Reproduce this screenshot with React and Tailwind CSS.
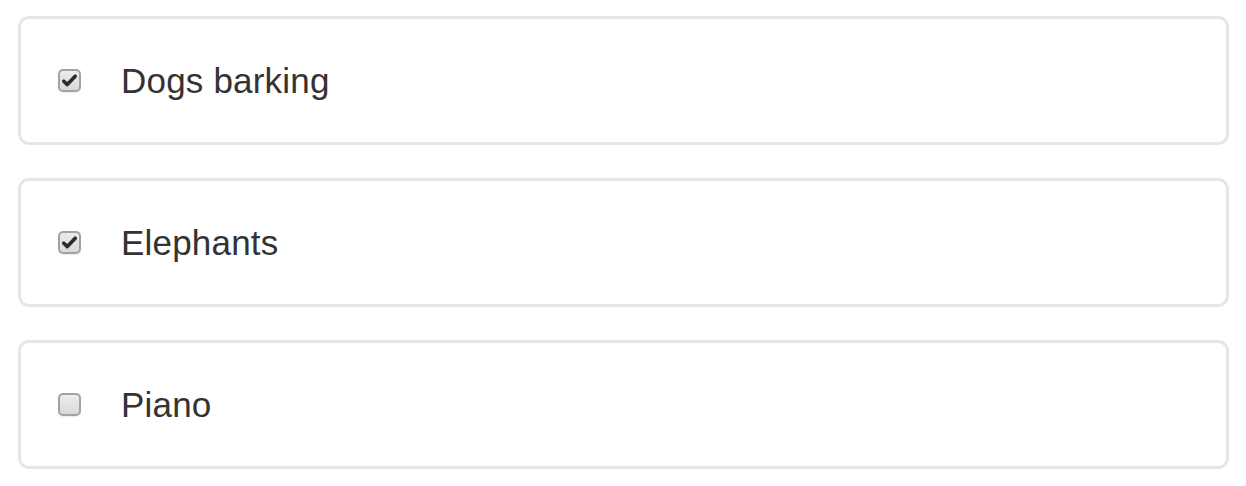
import React from "react";

function Box({ checked }) {
  return (
    <span className="relative flex h-[23px] w-[23px] shrink-0 items-center justify-center rounded-[5px] border-2 border-[#a3a3a3] bg-gradient-to-b from-[#ececec] to-[#d9d9d9] shadow-[0_1px_1px_rgba(0,0,0,0.08)]">
      {checked && (
        <svg width="15" height="13" viewBox="0 0 15 13" className="block">
          <path d="M1.8 7.2 L5.3 10.6 L13.2 2.2" fill="none" stroke="#2b2b2b" strokeWidth="3.6" strokeLinecap="round" strokeLinejoin="round" />
        </svg>
      )}
    </span>
  );
}

const items = [
  { label: "Dogs barking", checked: true },
  { label: "Elephants", checked: true },
  { label: "Piano", checked: false },
];

export default function App() {
  return (
    <div className="flex w-[1246px] flex-col gap-[33px] bg-white pl-[18px] pr-[17px] pt-[16px] pb-[17px]" style={{ fontFamily: '"Liberation Sans", Arial, sans-serif' }}>
      {items.map((it) => (
        <label key={it.label} className="flex h-[129px] items-center gap-[40px] rounded-[11px] border-[3px] border-[#e3e7ec] pl-[37px]">
          <Box checked={it.checked} />
          <span className="text-[35px] leading-none tracking-[0.2px] text-[#333333]">{it.label}</span>
        </label>
      ))}
    </div>
  );
}
